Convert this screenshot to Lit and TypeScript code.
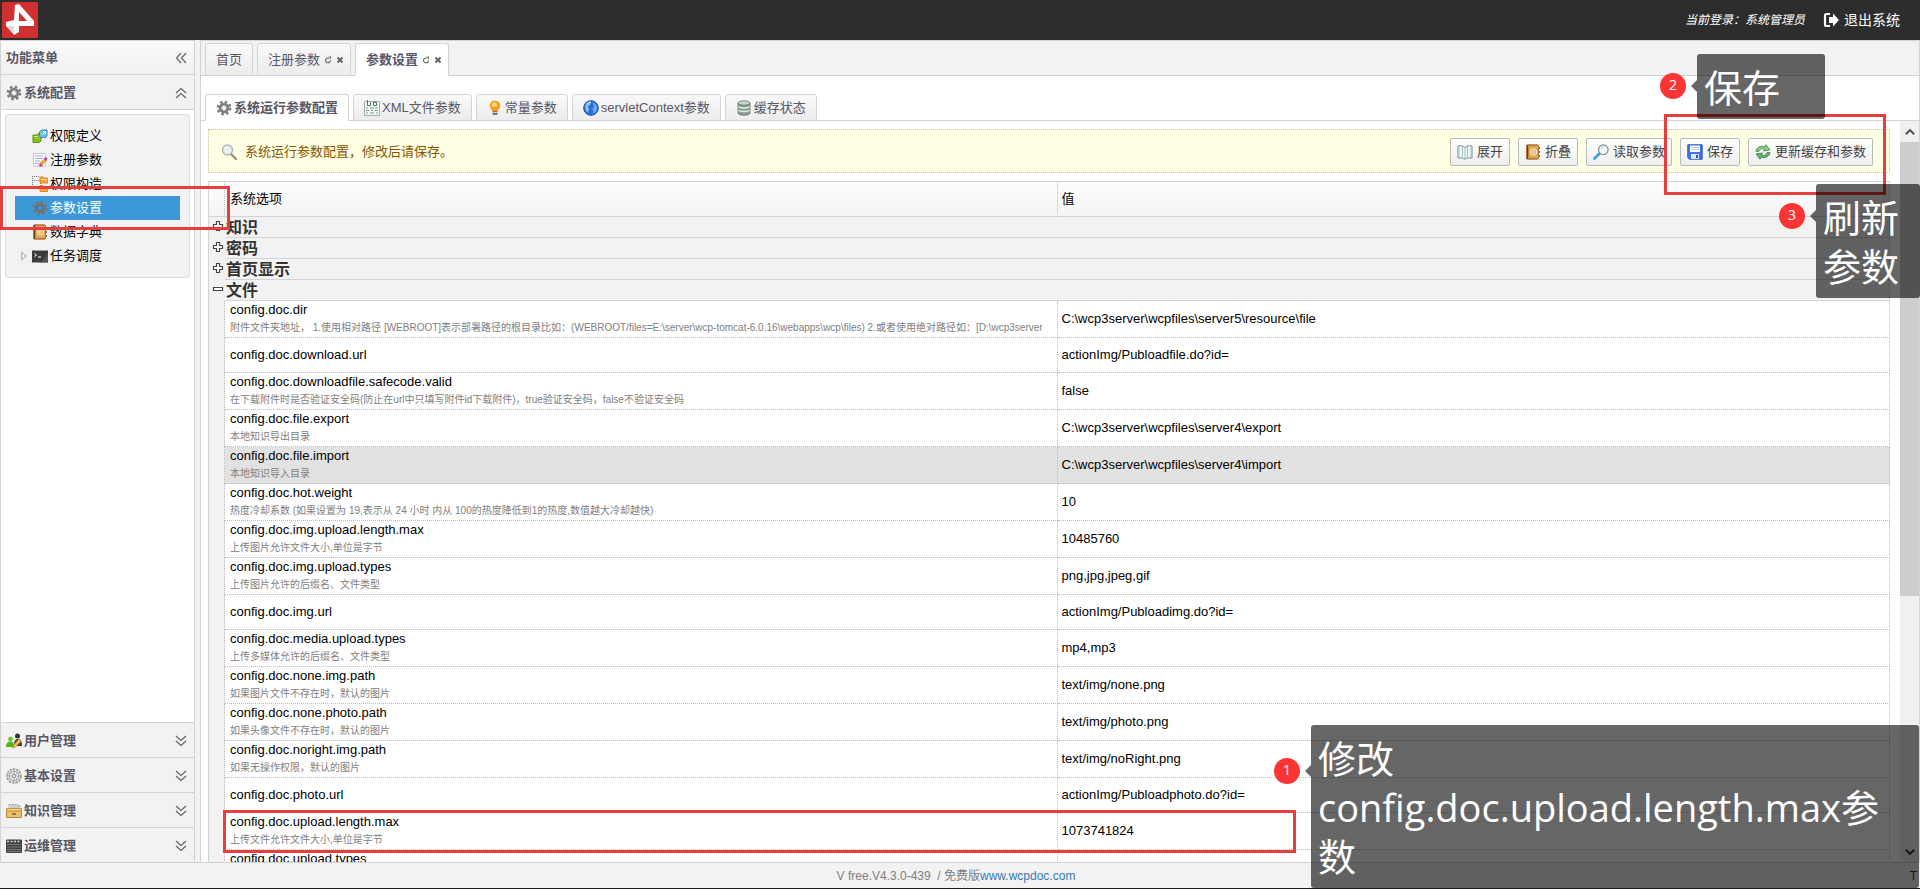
import { LitElement, html, css, svg, nothing, TemplateResult } from "lit";
import { customElement, property, state } from "lit/decorators.js";
import { classMap } from "lit/directives/class-map.js";

const glyphs: Record<string, TemplateResult> = {
  gear: svg`<g fill="none" stroke="#7d7d7d"><circle cx="8" cy="8" r="6.2" stroke-width="2.4" stroke-dasharray="2.5 2.37"/><circle cx="8" cy="8" r="4" stroke-width="2.6"/></g><circle cx="8" cy="8" r="2.400" fill="#fff" stroke="#666" stroke-width=".6"/>`,
  gearDim: svg`<g fill="none" stroke="#747474"><circle cx="8" cy="8" r="6.2" stroke-width="2.4" stroke-dasharray="2.5 2.37"/><circle cx="8" cy="8" r="4" stroke-width="2.6"/></g><circle cx="8" cy="8" r="2.600" fill="#3c98d9" stroke="#555" stroke-width=".6"/>`,
  wheel: svg`<g fill="none" stroke="#8b8f8f"><circle cx="8" cy="8" r="7" stroke-width="1.4" stroke-dasharray="2.6 .9"/><circle cx="8" cy="8" r="5"/><circle cx="8" cy="8" r="1.6"/><path d="M8 3v3M8 10v3M3 8h3M10 8h3M4.5 4.5l2 2M9.5 9.5l2 2M11.5 4.5l-2 2M6.500 9.500l-2 2" stroke-width=".8"/></g>`,
  link: svg`<path d="M1 7h4l1-1.500 3 2.500v5l-2 1.500H1z" fill="#8cc220" stroke="#5d8f10"/><path d="M2 8.500h4" stroke="#d3ee8e"/><path d="M7.500 4l2-2H15v6l-1.500 2-2.500-1-2 1-1.500-2z" fill="#6cc5ea" stroke="#2c8cc0"/><path d="M10.500 6.500l3-3M11 3.500h2.500V6" fill="none" stroke="#fff"/>`,
  note: svg`<path d="M1.500 1.500h12v13h-12z" fill="#fbfbff" stroke="#c3c3e0"/><path d="M3 4h8M3 6.500h8M3 9h5M3 11.500h4" stroke="#a9a9d8"/><path d="M7 14l1-3 5-5 2 2-5 5z" fill="#f5b335" stroke="#c77d17" stroke-width=".6"/><path d="M12 6.500l2-1.500 1.500 1.500L14 9z" fill="#a23fd0"/><circle cx="9" cy="13" r="1.600" fill="#e5366a"/>`,
  tree: svg`<path d="M0 .5h8M.5 0v10M.5 4.500h7M8.500 5v8" stroke="#777" stroke-dasharray="1 1" fill="none"/><path d="M8 1h3l1 1h4v5H8z" fill="#f7a93a" stroke="#d9780c" stroke-width=".8"/><path d="M8 9.500h3l1 1h4v5H8z" fill="#f7a93a" stroke="#d9780c" stroke-width=".8"/><path d="M9 3.500h6M9 12h6" stroke="#ffe0a6"/>`,
  book: svg`<rect x="1.500" y=".8" width="12" height="14.400" rx="1" fill="#c98336" stroke="#9a6222" stroke-width=".8"/><path d="M2.500 1v14" stroke="#6d3f10"/><rect x="4" y="2" width="9" height="12" fill="#e0a860"/><circle cx="8.500" cy="8" r="3.200" fill="none" stroke="#fff3dc" stroke-width=".9"/><circle cx="8.500" cy="8" r="1.200" fill="none" stroke="#fff3dc" stroke-width=".9"/><path d="M14.500 3v2M14.500 7v2M14.500 11v2" stroke="#8c6b3a"/>`,
  term: svg`<rect y="2" width="16" height="12.500" fill="#3b3b3b"/><path d="M0 2.500h16" stroke="#999"/><path d="M2.500 5.500l2 1.500-2 1.500M6 9h3" fill="none" stroke="#fff"/><path d="M9 14.500L16 6v8.500z" fill="#555"/>`,
  users: svg`<circle cx="4.500" cy="6" r="2.300" fill="#5fcb15"/><path d="M0 14c0-4 2-5.500 4.500-5.500S8 10 8 14z" fill="#4db80c"/><circle cx="11.500" cy="3" r="2.500" fill="#333"/><path d="M8 13c0-5 1-7 4-7s4 3 4 7z" fill="#3d3d3d"/><path d="M6.500 15l1-3L13 6l2.500 2-6 6z" fill="#f3bd5a" stroke="#a86a18" stroke-width=".6"/>`,
  drawer: svg`<path d="M3 5V1.500h2V5M6 5V1.500h2V5M9 5V1.500h2V5M12 5V2.500h2V5" fill="#fff" stroke="#999" stroke-width=".8"/><path d="M.5 5.500h15v3H.5z" fill="#f5d58a" stroke="#c19645"/><path d="M.5 8h15v6.500H.5z" fill="#eec069" stroke="#b98a35"/><path d="M6 11h4" stroke="#7c5715" stroke-width="1.400"/>`,
  clap: svg`<rect y="1.500" width="16" height="13.500" rx="1" fill="#3f3f3f"/><path d="M1 3.500h14" stroke="#ddd" stroke-width="1.500" stroke-dasharray="2 1.500"/><path d="M1 6.500h14M1 9h14M1 11.500h14M1 13.500h14" stroke="#8a8a8a" stroke-width=".8"/>`,
  xml: svg`<path d="M.5 1.500h15v14H.5z" fill="#f3f8f4" stroke="#9fb3a8"/><path d="M3.500 0v5.500h3V2M9.500 2.500h3v3h-3z" fill="none" stroke="#5b6b65"/><path d="M2 8h2M6 8h4M11 8h3M2 10.500h3M7 10.500h2M11 10.500h3M2 13h2M6 13h4M12 13h2" stroke="#6fa088"/>`,
  bulb: svg`<path d="M8 .5a5.300 5.300 0 0 1 5.300 5.300c0 2.700-2.300 3.600-2.600 5.700H5.300C5 9.400 2.700 8.500 2.700 5.800A5.300 5.300 0 0 1 8 .5z" fill="#fb9a16"/><path d="M7 2a4 4 0 0 1 3.500 4.500L5 7a4 4 0 0 1 2-5z" fill="#ffd879"/><rect x="5.500" y="11" width="5" height="4" rx="1" fill="#777"/><path d="M5.500 12.500h5" stroke="#ccc"/>`,
  globe: svg`<circle cx="8" cy="8" r="7.300" fill="#2b72d6" stroke="#1f4f9c"/><path d="M2.500 5C4 2.500 6 1.600 8 1.800L7 4.500l-2 2 1 3-1.500 3C2.500 11 1.700 8 2.500 5z" fill="#8fc3f8"/><path d="M9.500 2.500c3 .8 4.700 3 4.700 5.500s-1.700 4.700-3.700 5.700L9.500 9l1.500-3z" fill="#69a9f2"/><path d="M4 4c1-1.300 2.500-2 4-2" stroke="#e6f3ff" fill="none"/>`,
  db: svg`<g fill="#8ba195" stroke="#4f6358" stroke-width=".7"><path d="M2 3v10c0 3 12 3 12 0V3z"/><ellipse cx="8" cy="3" rx="6" ry="2.200" fill="#c9d6ce"/></g><path d="M2.300 6.500c1 2 10.400 2 11.400 0M2.300 10c1 2 10.400 2 11.400 0" fill="none" stroke="#e6efe9" stroke-width="1.300"/>`,
  lens: svg`<path d="M10 10l5 5" stroke="#a0917c" stroke-width="2.400" stroke-linecap="round"/><circle cx="6.500" cy="6" r="5" fill="#e4f0f8" stroke="#adb4b8" stroke-width="1.400"/><path d="M4 5c.5-1.500 2-2 3-2" stroke="#fff" fill="none" stroke-width="1.400"/>`,
  lensBlue: svg`<path d="M6 10l-4.500 4.500" stroke="#35a5dc" stroke-width="2.800" stroke-linecap="round"/><circle cx="10.300" cy="5.700" r="4.800" fill="#f3f9fc" stroke="#80888c" stroke-width="1.200"/><path d="M8 5c.5-1.500 2-2 3-2" stroke="#c4e4f4" fill="none" stroke-width="1.400"/>`,
  open: svg`<path d="M1 2c3-.8 5 0 6.800 1.500C9.500 2 12 1.200 15 2v12c-3-.6-5.500 0-7.200 1.200C6 14 4 13.400 1 14z" fill="#f1f8f8" stroke="#6f9096"/><path d="M8 3.500V15M5.500 2.500v11M10.500 2.500v11" stroke="#9fbfc4"/><path d="M2.500 3.500v9M13.500 3.500v9" stroke="#c9dde0"/>`,
  disk: svg`<path d="M.8.8h14.400v14.400H2.500L.8 13.500z" fill="#3d78e6" stroke="#2656bd"/><rect x="3" y="1.500" width="10" height="6.500" fill="#f6f9ff"/><path d="M4 3.500h8M4 5.500h8" stroke="#b9cdf2"/><rect x="4" y="10" width="8" height="5" fill="#dfe7f5"/><rect x="9" y="11" width="2" height="3" fill="#2656bd"/>`,
  sync: svg`<path d="M1 7.500C1.500 3.500 5.500 1.300 9.800 2.800L11 .8l4 5.200-6.500 1 1-2C7 4 4.500 5 3.800 7.500z" fill="#8cc78a" stroke="#3f8b45" stroke-width=".8"/><path d="M15 8.500c-.5 4-4.500 6.200-8.800 4.700L5 15.200 1 10l6.500-1-1 2c2.500 1 5 0 5.700-2.500z" fill="#6fb373" stroke="#357d3c" stroke-width=".8"/>`,
  exit: svg`<path d="M7 2H3.500Q2 2 2 3.500v9Q2 14 3.500 14H7" fill="none" stroke="#fff" stroke-width="2.200"/><path d="M6 5h4V1.500L16 8l-6 6.500V11H6z" fill="#fff"/>`,
  left: svg`<path d="M8 3L3.500 8 8 13M13 3L8.500 8l4.500 5" fill="none" stroke="#666" stroke-width="1.200"/>`,
  up: svg`<path d="M3 8l5-4.500L13 8M3 13l5-4.500 5 4.500" fill="none" stroke="#666" stroke-width="1.300"/>`,
  down: svg`<path d="M3 3l5 4.500L13 3M3 8l5 4.500L13 8" fill="none" stroke="#666" stroke-width="1.300"/>`,
  reload: svg`<path d="M13 9a5 4.800 0 1 1-3-4.500" fill="none" stroke="#666" stroke-width="2.200"/><path d="M9 1h5v6z" fill="#666"/>`,
  cross: svg`<path d="M3 3l10 10M13 3L3 13" stroke="#666" stroke-width="4"/>`,
  plus: svg`<path d="M6 2h4v4h4v4h-4v4H6v-4H2V6h4z" fill="#fff" stroke="#444" stroke-width="1.600"/>`,
  minus: svg`<path d="M2 6h12v4H2z" fill="#fff" stroke="#444" stroke-width="1.600"/>`,
  arrow: svg`<path d="M5 3l6 5-6 5z" fill="#fff" stroke="#999" stroke-width="1.300"/>`,
  scrollUp: svg`<path d="M2.500 11L8 5.500l5.500 5.500" fill="none" stroke="#505050" stroke-width="2.600"/>`,
  scrollDown: svg`<path d="M2.500 5L8 10.500 13.500 5" fill="none" stroke="#303030" stroke-width="2.600"/>`,
};

const icon = (name: string, size: "" | "s8" | "s12" = "") =>
  html`<svg class="icon ${size}" viewBox="0 0 16 16" aria-hidden="true">${glyphs[name]}</svg>`;

interface Param { key: string; note?: string; value: string; hot?: boolean }

const PARAMS: Param[] = [
  { key: "config.doc.dir", note: "附件文件夹地址， 1.使用相对路径 [WEBROOT]表示部署路径的根目录比如：(WEBROOT/files=E:\\server\\wcp-tomcat-6.0.16\\webapps\\wcp\\files) 2.或者使用绝对路径如：[D:\\wcp3server", value: "C:\\wcp3server\\wcpfiles\\server5\\resource\\file" },
  { key: "config.doc.download.url", value: "actionImg/Publoadfile.do?id=" },
  { key: "config.doc.downloadfile.safecode.valid", note: "在下载附件时是否验证安全码(防止在url中只填写附件id下载附件)，true验证安全码，false不验证安全码", value: "false" },
  { key: "config.doc.file.export", note: "本地知识导出目录", value: "C:\\wcp3server\\wcpfiles\\server4\\export" },
  { key: "config.doc.file.import", note: "本地知识导入目录", value: "C:\\wcp3server\\wcpfiles\\server4\\import", hot: true },
  { key: "config.doc.hot.weight", note: "热度冷却系数 (如果设置为 19,表示从 24 小时 内从 100的热度降低到1的热度,数值越大冷却越快)", value: "10" },
  { key: "config.doc.img.upload.length.max", note: "上传图片允许文件大小,单位是字节", value: "10485760" },
  { key: "config.doc.img.upload.types", note: "上传图片允许的后缀名、文件类型", value: "png,jpg,jpeg,gif" },
  { key: "config.doc.img.url", value: "actionImg/Publoadimg.do?id=" },
  { key: "config.doc.media.upload.types", note: "上传多媒体允许的后缀名、文件类型", value: "mp4,mp3" },
  { key: "config.doc.none.img.path", note: "如果图片文件不存在时，默认的图片", value: "text/img/none.png" },
  { key: "config.doc.none.photo.path", note: "如果头像文件不存在时，默认的图片", value: "text/img/photo.png" },
  { key: "config.doc.noright.img.path", note: "如果无操作权限，默认的图片", value: "text/img/noRight.png" },
  { key: "config.doc.photo.url", value: "actionImg/Publoadphoto.do?id=" },
  { key: "config.doc.upload.length.max", note: "上传文件允许文件大小,单位是字节", value: "1073741824" },
  { key: "config.doc.upload.types", note: "", value: "" },
];

const shared = css`
  *, *::before, *::after { box-sizing: border-box; }
  button { font: inherit; color: inherit; background: none; border: 0; padding: 0; margin: 0; cursor: pointer; text-align: left; }
  .icon { width: 16px; height: 16px; flex: none; display: block; }
  .s8 { width: 8px; height: 8px; }
  .s12 { width: 12px; height: 12px; }
`;

@customElement("side-menu")
export class SideMenu extends LitElement {
  @state() private current = "参数设置";

  static styles = [shared, css`
    :host { display: flex; flex-direction: column; width: 195px; flex: none; background: #fff; border: 1px solid #d3d3d3; border-bottom: 0; color: #575765; font-weight: bold; }
    .title, .head { display: flex; align-items: center; gap: 2px; width: 100%; padding: 1px 5px 0; background: #f2f2f2; }
    .title { height: 34px; border-bottom: 1px solid #d3d3d3; background: linear-gradient(#fafafa, #f0f0f0); }
    .head { height: 35px; }
    .open { border-bottom: 1px solid #d3d3d3; }
    .closed { border-top: 1px solid #d3d3d3; }
    .label { flex: 1; }
    .body { flex: 1; padding: 4px; min-height: 0; }
    .tree { list-style: none; margin: 0; padding: 9px; background: #f2f2f2; border: 1px solid #ddd; border-radius: 3px; font-weight: normal; color: #000; }
    .leaf { display: flex; align-items: center; gap: 2px; width: 100%; height: 24px; padding-left: 3px; }
    .twist { width: 12px; height: 12px; }
    .leaf.on { background: #3c98d9; color: #fff; }
  `];

  private leaves = [["权限定义", "link"], ["注册参数", "note"], ["权限构造", "tree"], ["参数设置", "gearDim"], ["数据字典", "book"], ["任务调度", "term"]];

  render() {
    return html`
      <div class="title"><span class="label">功能菜单</span><button aria-label="收起菜单">${icon("left")}</button></div>
      <button class="head open">${icon("gear")}<span class="label">系统配置</span>${icon("up")}</button>
      <div class="body">
        <ul class="tree">
          ${this.leaves.map(([name, glyph]) => html`<li><button
            class=${classMap({ leaf: true, on: name === this.current })}
            @click=${() => (this.current = name)}><span class="twist">${name === "任务调度" ? icon("arrow", "s12") : nothing}</span>${icon(glyph)}<span>${name}</span></button></li>`)}
        </ul>
      </div>
      ${[["用户管理", "users"], ["基本设置", "wheel"], ["知识管理", "drawer"], ["运维管理", "clap"]].map(([name, glyph]) => html`
        <button class="head closed">${icon(glyph)}<span class="label">${name}</span>${icon("down")}</button>`)}
    `;
  }
}

@customElement("param-grid")
export class ParamGrid extends LitElement {
  @state() private expanded = true;

  static styles = [shared, css`
    :host { display: block; color: #000; }
    .grid { width: 100%; table-layout: fixed; border-collapse: separate; border-spacing: 0; border-top: 1px solid #d3d3d3; border-left: 1px solid #d3d3d3; }
    .fold { width: 16px; }
    th, td { padding: 0 4px; text-align: left; border-right: 1px dotted #bbb; border-bottom: 1px dotted #bbb; overflow: hidden; white-space: nowrap; font-weight: normal; }
    .name { padding-left: 5px; }
    th { height: 35px; border-bottom: 1px solid #d3d3d3; background: linear-gradient(#fdfdfd, #f5f5f5); }
    .row td { height: 35px; }
    .row.noted td { height: 37px; }
    .row .gutter { background: #f2f2f2; border-bottom: 0; padding: 0; }
    .group td { height: 21px; padding: 2px 1px 0; border-bottom: 1px solid #d3d3d3; background: #f2f2f2; color: #333; font-size: 16px; line-height: 18px; font-weight: bold; overflow: visible; }
    .group .gutter { border-right: 0; border-bottom: 0; padding: 3px 0 0 3px; line-height: 12px; vertical-align: top; }
    .key { display: block; line-height: 18px; }
    .note { display: block; height: 18px; line-height: 18px; font-size: 10px; color: #808080; }
    .hot td { background: #e2e2e2; }
  `];

  private group(name: string, open = false) {
    return html`<tr class="group">
      <td class="gutter"><button aria-label=${name} @click=${() => name === "文件" && (this.expanded = !this.expanded)}>${icon(open ? "minus" : "plus", "s12")}</button></td>
      <td colspan="2">${name}</td>
    </tr>`;
  }

  render() {
    return html`<table class="grid">
      <colgroup><col class="fold" /><col /><col /></colgroup>
      <thead><tr><th></th><th class="name">系统选项</th><th>值</th></tr></thead>
      <tbody>
        ${["知识", "密码", "首页显示"].map((n) => this.group(n))}
        ${this.group("文件", this.expanded)}
        ${this.expanded ? PARAMS.map((p) => html`<tr class=${classMap({ row: true, noted: p.note !== undefined, hot: !!p.hot })}>
          <td class="gutter"></td>
          <td class="name"><span class="key">${p.key}</span>${p.note !== undefined ? html`<span class="note">${p.note}</span>` : nothing}</td>
          <td>${p.value}</td>
        </tr>`) : nothing}
      </tbody>
    </table>`;
  }
}

@customElement("step-note")
export class StepNote extends LitElement {
  @property() step = "";

  static styles = css`
    :host { position: absolute; display: flex; align-items: flex-start; color: #fff; font-family: "Open Sans", "Noto Sans CJK SC", sans-serif; }
    .badge { width: 26px; height: 26px; border-radius: 50%; background: #fa3534; font-size: 14px; line-height: 24px; text-align: center; margin: var(--drop, 19px) 5px 0 0; flex: none; }
    .tip { width: 0; height: 0; margin-top: calc(var(--drop, 19px) + 7px); border: 6px solid transparent; border-left: 0; border-right-color: rgba(0, 0, 0, 0.6); flex: none; }
    .box { flex: 1; box-sizing: border-box; padding: 9px 8px 7px 7px; border-radius: 3px; background: rgba(0, 0, 0, 0.6); font-size: 38px; line-height: 49px; word-break: break-word; }
  `;

  render() {
    return html`<div class="badge">${this.step}</div><div class="tip"></div><div class="box"><slot></slot></div>`;
  }
}

@customElement("app-root")
export class AppRoot extends LitElement {
  @state() private page = "系统运行参数配置";

  static styles = [shared, css`
    :host { position: relative; display: flex; flex-direction: column; height: 100vh; overflow: hidden; background: #f2f2f2; color: #575765; font: 13px/20px "Liberation Sans", "Noto Sans CJK SC", sans-serif; }
    .top { display: flex; align-items: center; height: 40px; flex: none; padding: 0 20px 0 2px; background: #2d2d2d; color: #fff; }
    .logo { width: 36px; height: 36px; display: block; }
    .who { margin-left: auto; font-size: 12px; font-style: italic; }
    .exit { display: flex; align-items: center; gap: 5px; margin-left: 18px; color: #fff; font-size: 14px; text-decoration: none; }
    .work { flex: 1; min-height: 0; display: flex; gap: 5px; }
    .main { flex: 1; min-width: 0; display: flex; flex-direction: column; background: #fff; border: 1px solid #d3d3d3; border-bottom: 0; }
    .tabs { display: flex; align-items: flex-end; gap: 4px; height: 35px; padding: 0 4px; flex: none; border-bottom: 1px solid #d3d3d3; background: #f2f2f2; }
    .inner { height: 45px; background: #fff; }
    .tab { display: flex; align-items: center; height: 33px; margin-bottom: -1px; padding: 0 10px; border: 1px solid #d3d3d3; border-radius: 3px 3px 0 0; background: linear-gradient(#f9f9f9, #ececec); white-space: nowrap; }
    .inner .tab { height: 27px; gap: 2px; }
    .tab.on { background: #fff; border-bottom-color: #fff; font-weight: bold; }
    .closable { padding-right: 6px; gap: 4px; }
    .view { flex: 1; min-height: 0; display: flex; }
    .sheet { flex: 1; min-width: 0; overflow: hidden; padding: 8px 10px 0 7px; display: flex; flex-direction: column; gap: 8px; }
    .bar { display: flex; align-items: center; gap: 8px; height: 44px; flex: none; padding: 2px 16px 0 12px; border: 1px dotted #c4c498; background: #ffffe3; color: #8a5500; }
    .msg { flex: 1; }
    .btn { display: flex; align-items: center; gap: 4px; height: 28px; padding: 0 6px; border: 1px solid #bbb; border-radius: 2px; background: linear-gradient(#fff, #eee); color: #444; white-space: nowrap; }
    .scroll { width: 19px; flex: none; display: flex; flex-direction: column; background: #f0f0f0; }
    .scroll button { display: flex; align-items: center; justify-content: center; height: 21px; flex: none; }
    .track { flex: 1; }
    .thumb { height: 65%; background: #cdcdcd; }
    .foot { position: relative; height: 27px; flex: none; border-top: 1px solid #d3d3d3; border-bottom: 1px solid #1c1a18; color: #808080; font-size: 12px; line-height: 26px; text-align: center; white-space: pre; padding-right: 8px; }
    .foot a { color: #337ab7; text-decoration: none; }
    .edge { position: absolute; right: 3px; top: 0; color: #333; }
    .mark { position: absolute; border: 3px solid #e53e3c; pointer-events: none; }
    .m-menu { left: 0; top: 186px; width: 230px; height: 44px; }
    .m-save { right: 34px; top: 114px; width: 222px; height: 81px; }
    .m-row { left: 223px; top: 810px; width: 1073px; height: 43px; }
    .n1 { left: 1274px; right: 1px; top: 725px; --drop: 33px; }
    .n2 { left: 1660px; top: 54px; width: 165px; }
    .n3 { left: 1779px; right: 0; top: 184px; }
  `];

  render() {
    return html`
      <header class="top">
        <svg class="logo" viewBox="0 0 36 36" role="img" aria-label="WCP"><rect width="36" height="36" fill="#d22f30"/><path d="M13 3l4-1 15 17v5H17v6l-5 3v-9H4v-4l8-2z" fill="#fff"/><path d="M17 10v9h8z" fill="#d22f30"/><path d="M4 21l8-2 20 0v5H4z" fill="#fff"/><path d="M4 24h8v9z" fill="#ddd"/></svg>
        <span class="who">当前登录：系统管理员</span>
        <a class="exit" href="#">${icon("exit")}退出系统</a>
      </header>
      <div class="work">
        <side-menu></side-menu>
        <main class="main">
          <nav class="tabs">
            <div class="tab"><button>首页</button></div>
            <div class="tab closable"><button>注册参数</button><button aria-label="刷新">${icon("reload", "s8")}</button><button aria-label="关闭">${icon("cross", "s8")}</button></div>
            <div class="tab closable on"><button>参数设置</button><button aria-label="刷新">${icon("reload", "s8")}</button><button aria-label="关闭">${icon("cross", "s8")}</button></div>
          </nav>
          <nav class="tabs inner">
            ${[["系统运行参数配置", "gear"], ["XML文件参数", "xml"], ["常量参数", "bulb"], ["servletContext参数", "globe"], ["缓存状态", "db"]].map(([name, glyph]) => html`
              <button class=${classMap({ tab: true, on: name === this.page })} @click=${() => (this.page = name)}>${icon(glyph)}<span>${name}</span></button>`)}
          </nav>
          <div class="view">
            <section class="sheet">
              <div class="bar">
                ${icon("lens")}<span class="msg">系统运行参数配置，修改后请保存。</span>
                ${[["展开", "open"], ["折叠", "book"], ["读取参数", "lensBlue"], ["保存", "disk"], ["更新缓存和参数", "sync"]].map(([name, glyph]) => html`
                  <button class="btn">${icon(glyph)}${name}</button>`)}
              </div>
              <param-grid></param-grid>
            </section>
            <div class="scroll">
              <button aria-label="向上滚动">${icon("scrollUp", "s12")}</button>
              <div class="track"><div class="thumb"></div></div>
              <button aria-label="向下滚动">${icon("scrollDown", "s12")}</button>
            </div>
          </div>
        </main>
      </div>
      <footer class="foot">V free.V4.3.0-439  / 免费版<a href="#">www.wcpdoc.com</a><span class="edge">T</span></footer>
      <div class="mark m-menu"></div>
      <div class="mark m-save"></div>
      <div class="mark m-row"></div>
      <step-note class="n1" step="1">修改<br />config.doc.upload.length.max参数</step-note>
      <step-note class="n2" step="2">保存</step-note>
      <step-note class="n3" step="3">刷新参数</step-note>
    `;
  }
}
